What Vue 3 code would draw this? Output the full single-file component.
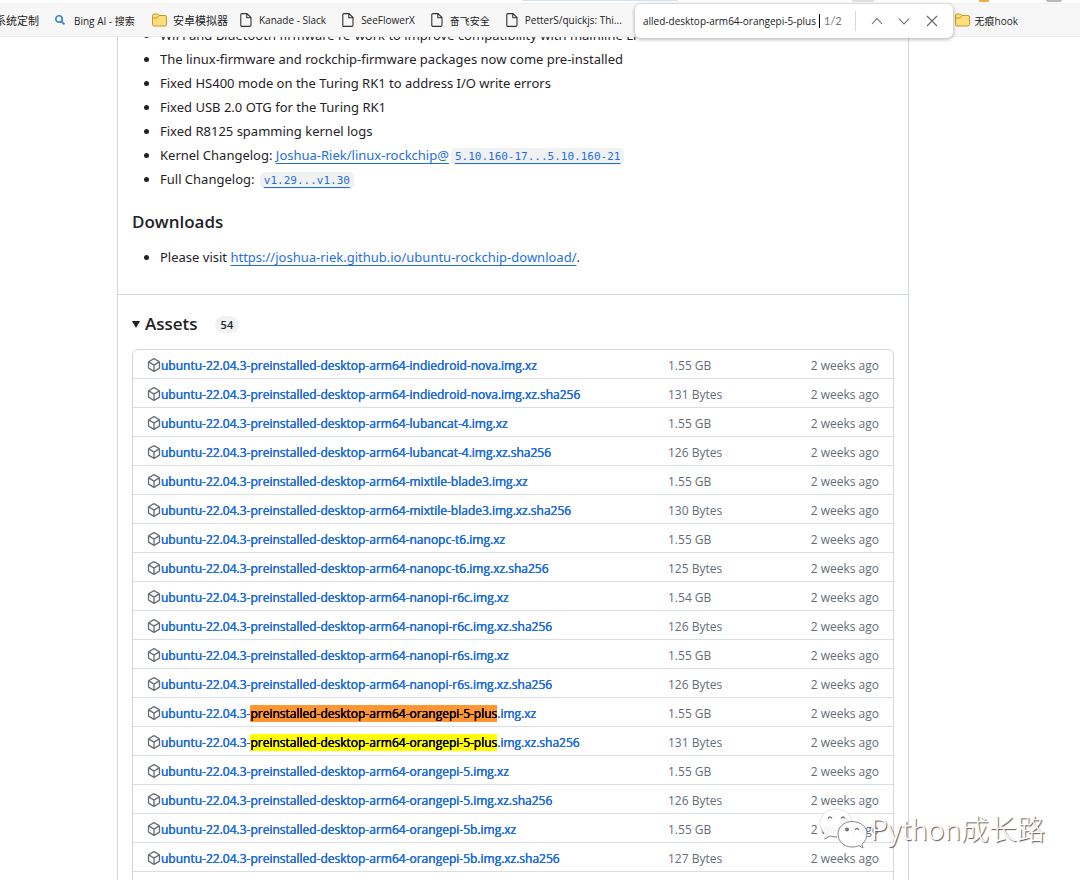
<template>
    <div class="page">
        <header class="browser">
            <div class="tab-edge">
                <span class="edge-blue"></span>
                <span class="edge-tab"></span>
                <span class="edge-orange"></span>
                <span class="edge-avatar"></span>
            </div>
            <nav class="bookmarks">
                <a v-for="mark in bookmarks" :key="mark.title" href="#" class="bookmark" :class="mark.kind">
                    <svg v-if="mark.kind === 'search'" width="12" height="12" viewBox="0 0 12 12" fill="none">
                        <circle cx="5" cy="5" r="3.2" stroke="#3b83cb" stroke-width="1.6" />
                        <path d="M7.4 7.4L10.4 10.4" stroke="#3b83cb" stroke-width="1.8" />
                    </svg>
                    <svg v-else-if="mark.kind.startsWith('folder')" width="15" height="14" viewBox="0 0 15 14">
                        <path d="M.5 3V11.5Q.5 13 2 13H13Q14.500 13 14.500 11.500V4Q14.500 2.500 13 2.500H7L5.500 1H2Q.5 1 .5 3Z" fill="#ffdc7c" stroke="#c39a2c" />
                        <path d="M.5 5H5L7 2.500" fill="none" stroke="#c39a2c" />
                    </svg>
                    <svg v-else-if="mark.kind === 'file'" width="12" height="14" viewBox="0 0 12 14" fill="none" stroke="#333" stroke-width="1.1">
                        <path d="M2 .6H7L11 4.600V12Q11 13.400 9.700 13.400H2Q.8 13.400 .8 12V2Q.8 .6 2 .6ZM6.800 .8V4.800H10.800" />
                    </svg>
                    <span>{{ mark.title }}</span>
                </a>
            </nav>
            <form class="find-bar" @submit.prevent>
                <input v-model="query" class="find-input" type="text" aria-label="Find on page">
                <span class="caret"></span>
                <span class="find-count">1/2</span>
                <button type="button" aria-label="Previous">
                    <svg width="12" height="12" viewBox="0 0 12 12"><path d="M1 9L6 3.500L11 9" /></svg>
                </button>
                <button type="button" aria-label="Next">
                    <svg width="12" height="12" viewBox="0 0 12 12"><path d="M1 3.500L6 9L11 3.500" /></svg>
                </button>
                <button type="button" aria-label="Close">
                    <svg width="12" height="12" viewBox="0 0 12 12"><path d="M1 1L11 11M11 1L1 11" /></svg>
                </button>
            </form>
        </header>

        <main class="release">
            <section class="notes">
                <ul>
                    <li v-for="note in notes" :key="note">{{ note }}</li>
                    <li>Kernel Changelog: <a href="#">Joshua-Riek/linux-rockchip@</a><code><a href="#">5.10.160-17...5.10.160-21</a></code></li>
                    <li>Full Changelog: <code><a href="#">v1.29...v1.30</a></code></li>
                </ul>
                <h3>Downloads</h3>
                <ul>
                    <li>Please visit <a href="#">https://joshua-riek.github.io/ubuntu-rockchip-download/</a>.</li>
                </ul>
            </section>

            <section class="assets">
                <h3 class="assets-title">
                    <svg width="8" height="8" viewBox="0 0 8 8"><path d="M0 1H8L4 8Z" fill="#1f2328" /></svg>
                    Assets
                    <span class="counter">54</span>
                </h3>
                <div class="asset-box">
                    <table>
                        <tbody>
                            <tr v-for="asset in assets" :key="asset.name">
                                <td class="name">
                                    <div class="name-inner">
                                        <svg width="14" height="14" viewBox="0 0 16 16" fill="#656d76">
                                            <path d="m8.878.392 5.250 3.045c.54.314.872.890.872 1.514v6.098a1.750 1.750 0 0 1-.872 1.514l-5.250 3.045a1.750 1.750 0 0 1-1.756 0l-5.250-3.045A1.750 1.750 0 0 1 1 11.049V4.951c0-.624.332-1.201.872-1.514L7.122.392a1.750 1.750 0 0 1 1.756 0ZM7.875 1.690l-4.630 2.685L8 7.133l4.755-2.758-4.630-2.685a.248.248 0 0 0-.25 0ZM2.500 5.677v5.372c0 .09.047.171.125.216l4.625 2.683V8.432Zm6.250 8.271 4.625-2.683a.25.25 0 0 0 .125-.216V5.677L8.750 8.432Z" />
                                        </svg>
                                        <a href="#">{{ asset.mark ? 'ubuntu-22.04.3-' : asset.name }}<template v-if="asset.mark"><mark :class="asset.mark">preinstalled-desktop-arm64-orangepi-5-plus</mark>{{ asset.tail }}</template></a>
                                    </div>
                                </td>
                                <td class="size">{{ asset.size }}</td>
                                <td class="date">2 weeks ago</td>
                            </tr>
                        </tbody>
                    </table>
                </div>
            </section>
        </main>

        <div class="watermark">
            <svg width="48" height="42" viewBox="0 0 48 42">
                <path d="M17 2C8 2 1 8 1 16C1 21 3.500 24.500 7 27L5.500 32L11.500 29C13.500 29.700 15 30 18 30C27 30 33 23.500 33 16C33 8 26 2 17 2Z" fill="#fff" fill-opacity=".9" stroke="#ddd" stroke-width=".8" />
                <path d="M5.500 32L11.500 29C14 29.800 16 30 18 30" fill="none" stroke="#888" />
                <path d="M33 14.500C25 14.500 19 20 19 27C19 34.500 25 40 33 40C36 40 38 39.500 40 38.500L44 41L43 37C46 34.500 48 31 48 27C48 20 42 14.500 33 14.500Z" fill="#fff" fill-opacity=".9" stroke="#888" />
                <path d="M9 11.500Q11 8.500 13 11.500M22 11.500Q24 8.500 26 11.500M36 23Q38 20 40 23" fill="none" stroke="#777" stroke-width="1.3" />
                <circle cx="28" cy="22.500" r="2" fill="#777" />
            </svg>
            <span>Python成长路</span>
        </div>
    </div>
</template>

<script setup>
import { ref } from 'vue';

const query = ref('alled-desktop-arm64-orangepi-5-plus');

const bookmarks = [
    { title: '系统定制', kind: 'plain' },
    { title: 'Bing AI - 搜索', kind: 'search' },
    { title: '安卓模拟器', kind: 'folder' },
    { title: 'Kanade - Slack', kind: 'file' },
    { title: 'SeeFlowerX', kind: 'file' },
    { title: '奋飞安全', kind: 'file' },
    { title: 'PetterS/quickjs: Thi...', kind: 'file' },
    { title: '无痕hook', kind: 'folder-last' }
];

const notes = [
    'WiFi and Bluetooth firmware re-work to improve compatibility with mainline Li',
    'The linux-firmware and rockchip-firmware packages now come pre-installed',
    'Fixed HS400 mode on the Turing RK1 to address I/O write errors',
    'Fixed USB 2.0 OTG for the Turing RK1',
    'Fixed R8125 spamming kernel logs'
];

const boards = [
    ['indiedroid-nova', '1.55 GB', '131 Bytes'],
    ['lubancat-4', '1.55 GB', '126 Bytes'],
    ['mixtile-blade3', '1.55 GB', '130 Bytes'],
    ['nanopc-t6', '1.55 GB', '125 Bytes'],
    ['nanopi-r6c', '1.54 GB', '126 Bytes'],
    ['nanopi-r6s', '1.55 GB', '126 Bytes'],
    ['orangepi-5-plus', '1.55 GB', '131 Bytes'],
    ['orangepi-5', '1.55 GB', '126 Bytes'],
    ['orangepi-5b', '1.55 GB', '127 Bytes']
];

const assets = boards.flatMap(([board, size, hashSize]) => {
    const name = `ubuntu-22.04.3-preinstalled-desktop-arm64-${board}.img.xz`;
    const found = board === 'orangepi-5-plus';
    return [
        { name, size, mark: found && 'current', tail: '.img.xz' },
        { name: `${name}.sha256`, size: hashSize, mark: found && 'other', tail: '.img.xz.sha256' }
    ];
});
</script>

<style>
body {
    background: #fff;
    overflow: hidden;
}
</style>

<style scoped>
.page {
    position: relative;
    height: 100vh;
    overflow: hidden;
    color: #1f2328;
    font-family: 'Noto Sans', 'Noto Sans CJK SC', sans-serif;
    font-size: 13px;
}

a {
    color: #1f6fde;
}

.browser {
    position: relative;
    z-index: 1;
    height: 37px;
    background: #f7f7f7;
    border-bottom: 1px solid #ececec;
    box-sizing: border-box;
}

.tab-edge {
    position: relative;
    height: 4px;
    background: #fff;
    border-bottom: 1px solid #f0f0f0;
    box-sizing: border-box;
    overflow: hidden;
}

.tab-edge span {
    position: absolute;
    top: 0;
    height: 2px;
}

.tab-edge .edge-blue {
    left: 522px;
    width: 156px;
    height: 1px;
    background: #cfe4f5;
}

.edge-tab {
    right: 206px;
    width: 22px;
    background: #e2e2e2;
}

.edge-orange {
    right: 91px;
    width: 10px;
    background: #f0a848;
}

.edge-avatar {
    right: 18px;
    width: 16px;
    background: #bbb;
    border-radius: 0 0 8px 8px;
}

.bookmarks {
    display: flex;
    align-items: center;
    height: 32px;
    font-family: 'Open Sans', 'Noto Sans CJK SC', sans-serif;
    font-size: 10px;
}

.bookmark {
    display: flex;
    align-items: center;
    flex-shrink: 0;
    gap: 7px;
    margin-right: 16px;
    color: #222;
    text-decoration: none;
    white-space: nowrap;
}

.bookmark.plain {
    margin-left: -5px;
    margin-right: 15px;
    font-size: 11px;
}

.bookmark.search {
    gap: 8px;
    width: 82px;
}

.bookmark.folder {
    gap: 6px;
    margin-right: 12px;
    font-size: 11px;
}

.bookmark.folder-last {
    gap: 5px;
    margin-left: auto;
    margin-right: 62px;
}

.find-bar {
    position: absolute;
    top: 4px;
    right: 127px;
    display: flex;
    align-items: center;
    width: 318px;
    height: 34px;
    padding: 0 10px 0 8px;
    box-sizing: border-box;
    background: #fff;
    border-radius: 6px;
    box-shadow: 0 1px 4px rgba(0, 0, 0, 0.35);
}

.find-input {
    width: 178px;
    padding: 0;
    border: 0;
    outline: 0;
    color: #222;
    font-family: 'Open Sans', sans-serif;
    font-size: 10px;
}

.caret {
    width: 1px;
    height: 14px;
    background: #000;
}

.find-count {
    margin: 0 10px 0 4px;
    padding-right: 13px;
    border-right: 1px solid #d8d8d8;
    color: #767676;
    font-family: Lato, sans-serif;
    font-size: 11px;
    line-height: 20px;
}

.find-bar button {
    display: flex;
    justify-content: center;
    width: 22px;
    margin-right: 6px;
    padding: 0;
    border: 0;
    background: none;
}

.find-bar button:last-child {
    margin-right: 0;
}

.find-bar button path {
    fill: none;
    stroke: #666;
    stroke-width: 1.1;
}

.release {
    margin: -15px 171px 0 117px;
    border: 1px solid #d0d7de;
    border-top: 0;
}

.notes {
    padding: 1px 14px 25px;
    border-bottom: 1px solid #d0d7de;
}

.notes ul {
    margin: 0;
    padding-left: 28px;
}

.notes li {
    line-height: 24px;
    white-space: nowrap;
}

.notes li a {
    text-underline-offset: 3px;
}

.notes code {
    margin-left: 2px;
    padding: 2px 4px;
    border-radius: 5px;
    background: #eff1f3;
    font-family: 'DejaVu Sans Mono', monospace;
    font-size: 11px;
    line-height: 16px;
}

h3 {
    margin: 20px 0 12px;
    font-family: 'Open Sans', sans-serif;
    font-size: 17px;
    font-weight: 600;
    line-height: 22px;
}

.assets {
    padding: 0 14px;
}

.assets-title {
    display: flex;
    align-items: center;
    gap: 5px;
    margin: 18px 0 14px;
}

.counter {
    margin-left: 12px;
    padding: 0 6px;
    border-radius: 9px;
    background: #eff1f3;
    font-size: 11px;
    line-height: 17px;
}

.asset-box {
    padding-bottom: 20px;
    border: 1px solid #d0d7de;
    border-radius: 6px;
}

table {
    width: 100%;
    border-collapse: collapse;
    font-family: 'Open Sans', sans-serif;
    font-size: 12px;
}

td {
    height: 24px;
    padding: 4px 0 0;
    border-bottom: 1px solid #d8dee4;
    line-height: 16px;
    white-space: nowrap;
}

.name {
    padding-left: 14px;
}

.name-inner {
    display: flex;
    align-items: center;
}

.name-inner svg {
    margin-bottom: 2px;
}

.name a {
    text-decoration: none;
    text-shadow: 0 0 0 currentColor, 0 0 0 currentColor;
}

mark {
    color: #000;
}

mark.current {
    background: #ff9632;
}

mark.other {
    background: #ff0;
}

.size,
.date {
    color: #656d76;
}

.size {
    width: 100px;
}

.date {
    width: 111px;
    padding-right: 14px;
    text-align: right;
}

.watermark {
    position: absolute;
    right: 35px;
    bottom: 31px;
    display: flex;
    align-items: center;
    gap: 4px;
    color: #fff;
    font-family: 'Noto Sans CJK SC', sans-serif;
    font-size: 28px;
    font-weight: 300;
    line-height: 42px;
    text-shadow: 1px 1px 1px #555;
}
</style>
